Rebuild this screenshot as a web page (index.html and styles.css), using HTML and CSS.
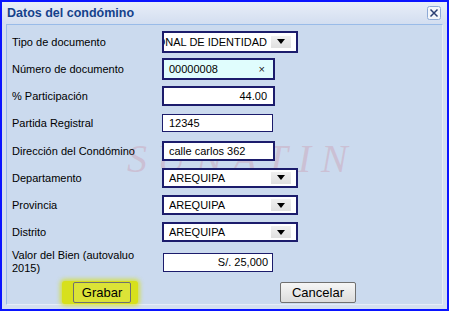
FILE: index.html
```html
<!DOCTYPE html>
<html lang="es">
<head>
<meta charset="utf-8">
<title>Datos del condómino</title>
<link rel="stylesheet" href="styles.css">
</head>
<body>
<div class="win">
  <div class="hdr">
    <span class="title">Datos del condómino</span>
    <span class="close">
      <svg width="14" height="14" viewBox="0 0 14 14"><rect x="0.5" y="0.5" width="13" height="13" rx="2" fill="#f3f6fb" stroke="#8eaad6"/><path d="M3.5 3.5 L10.5 10.5 M10.5 3.5 L3.5 10.5" stroke="#2b3f73" stroke-width="1.5"/></svg>
    </span>
  </div>
  <div class="body">
    <div class="wm">SUNATIN</div>
    <div class="row"><span class="lbl">Tipo de documento</span>
      <div class="sel tall"><span class="val clip"><span>DOCUMENTO NACIONAL DE IDENTIDAD</span></span><span class="dd"><svg width="8" height="5" viewBox="0 0 8 5"><path d="M0 0 H8 L4 5 Z" fill="#000"/></svg></span></div>
    </div>
    <div class="row"><span class="lbl">Número de documento</span>
      <div class="inp tall focus"><span>00000008</span><span class="clr">×</span></div>
    </div>
    <div class="row"><span class="lbl">% Participación</span>
      <div class="inp right">44.00</div>
    </div>
    <div class="row"><span class="lbl">Partida Registral</span>
      <div class="inp thin short">12345</div>
    </div>
    <div class="row"><span class="lbl">Dirección del Condómino</span>
      <div class="inp">calle carlos 362</div>
    </div>
    <div class="row"><span class="lbl">Departamento</span>
      <div class="sel"><span class="val">AREQUIPA</span><span class="dd"><svg width="8" height="5" viewBox="0 0 8 5"><path d="M0 0 H8 L4 5 Z" fill="#000"/></svg></span></div>
    </div>
    <div class="row"><span class="lbl">Provincia</span>
      <div class="sel"><span class="val">AREQUIPA</span><span class="dd"><svg width="8" height="5" viewBox="0 0 8 5"><path d="M0 0 H8 L4 5 Z" fill="#000"/></svg></span></div>
    </div>
    <div class="row"><span class="lbl">Distrito</span>
      <div class="sel"><span class="val">AREQUIPA</span><span class="dd"><svg width="8" height="5" viewBox="0 0 8 5"><path d="M0 0 H8 L4 5 Z" fill="#000"/></svg></span></div>
    </div>
    <div class="row row-last"><span class="lbl two">Valor del Bien (autovaluo 2015)</span>
      <div class="inp thin right valor">S/. 25,000</div>
    </div>
    <div class="actions">
      <span class="hl"><button class="btn grabar">Grabar</button></span>
      <button class="btn cancel">Cancelar</button>
    </div>
  </div>
</div>
</body>
</html>
```
FILE: styles.css
```css
* { box-sizing: border-box; }
html, body { margin: 0; padding: 0; }
body { font-family: "Liberation Sans", Arial, sans-serif; background: #fff; }

.win {
  width: 449px;
  height: 311px;
  border: 2px solid #0a14ff;
  background: #d5e0f0;
  display: flex;
  flex-direction: column;
  padding: 0 4px 4px 4px;
}

.hdr {
  height: 22px;
  margin: 0 -4px;
  padding: 0 6px 0 5px;
  display: flex;
  align-items: center;
  justify-content: space-between;
  background: linear-gradient(#e8eef8, #d3def0);
}
.title {
  font-weight: bold;
  font-size: 12.5px;
  color: #15428b;
}
.close { display: flex; }
.close svg { display: block; }

.body {
  flex: 1;
  position: relative;
  background: #cbdaee;
  border: 1px solid #99bbe8;
  border-right-color: #e6edf8;
  border-bottom-color: #e6edf8;
  padding: 3px 0 0 5px;
}

.wm {
  position: absolute;
  left: 120px;
  top: 110px;
  font-family: "Liberation Serif", "Times New Roman", serif;
  font-style: italic;
  font-size: 40px;
  letter-spacing: 10px;
  color: rgba(205, 150, 170, 0.38);
  white-space: nowrap;
}

.row {
  position: relative;
  display: flex;
  align-items: center;
  height: 27.25px;
}
.row-last { height: 32px; }
.lbl {
  width: 150px;
  font-size: 11px;
  color: #000;
}
.lbl.two { line-height: 13px; padding-right: 20px; }

.sel {
  width: 136px;
  height: 20px;
  border: 2px solid #1c1c6c;
  background: #fff;
  display: flex;
  align-items: center;
  padding: 0 5px 0 5px;
  font-size: 11px;
}
.sel.tall { height: 22px; padding-left: 0; }
.val { flex: 1; white-space: nowrap; overflow: hidden; }
.val.clip { display: flex; justify-content: flex-end; margin-right: 4px; }
.dd {
  width: 20px;
  height: 12px;
  background: linear-gradient(#f0f0f0, #e0e0e0);
  display: flex;
  align-items: center;
  justify-content: center;
}
.dd svg { display: block; }

.inp {
  width: 113px;
  height: 20px;
  border: 2px solid #1c1c6c;
  background: #fff;
  padding: 0 6px 0 5px;
  font-size: 11px;
  display: flex;
  align-items: center;
  white-space: nowrap;
}
.inp.tall { height: 22px; }
.inp.thin { border-width: 1px; padding-left: 6px; }
.inp.short { width: 111px; height: 18px; }
.inp.right { justify-content: flex-end; }
.inp.focus { background: #e0fdfd; justify-content: space-between; padding-right: 8px; }
.inp.valor { width: 110px; height: 19px; margin-left: 1px; padding-right: 4px; }
.clr { font-size: 11px; color: #222; }

.actions {
  display: flex;
  align-items: center;
  margin-top: 3px;
  margin-left: 50px;
}
.hl {
  display: flex;
  padding: 1px 7px 1px 11px;
  background: #d7e01c;
  box-shadow: 0 0 4px 2px rgba(215, 224, 28, 0.75);
  border-radius: 3px;
}
.btn {
  font-family: "Liberation Sans", Arial, sans-serif;
  font-size: 13px;
  height: 21px;
  padding: 0;
  color: #000;
  border: 1px solid #707070;
  border-radius: 2px;
}
.grabar {
  width: 58px;
  background: rgba(255, 255, 255, 0.12);
}
.cancel {
  width: 76px;
  margin-left: 142px;
  background: linear-gradient(#f6f6f6, #dcdcdc);
}
```
